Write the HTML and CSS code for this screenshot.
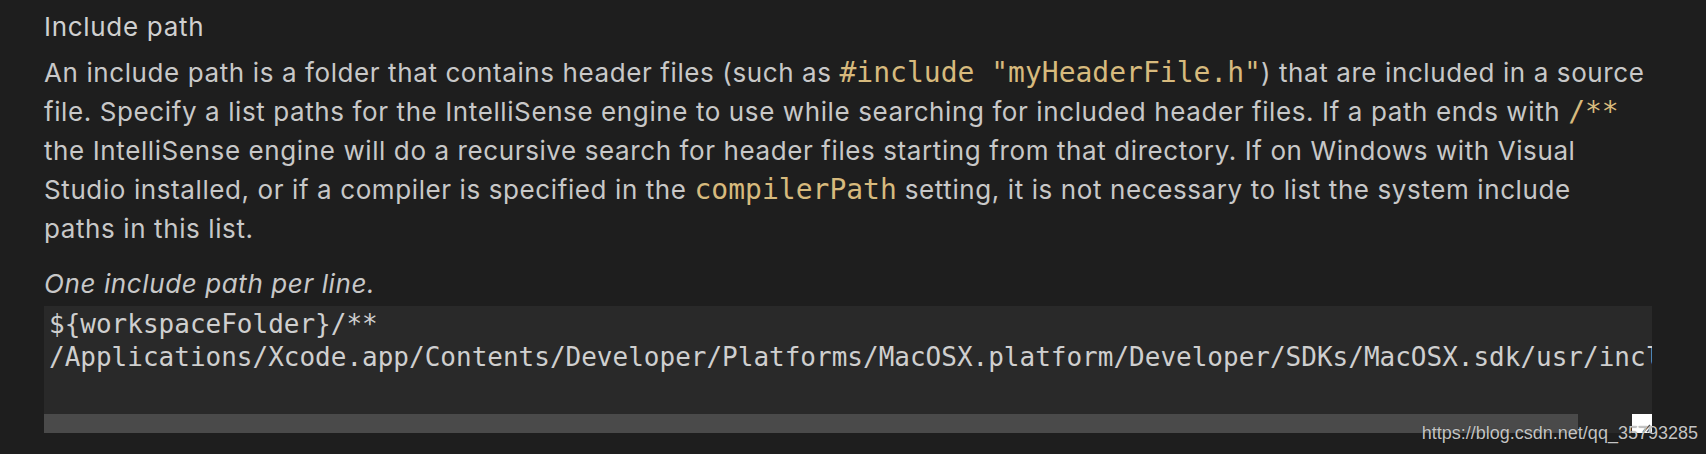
FILE: index.html
```html
<!DOCTYPE html>
<html>
<head>
<meta charset="utf-8">
<link rel="stylesheet" href="styles.css">
</head>
<body>
<div class="setting">
  <div class="title">Include path</div>
  <div class="desc">An include path is a folder that contains header files (such as <code>#include "myHeaderFile.h"</code>) that are included in a source<br>file. Specify a list paths for the IntelliSense engine to use while searching for included header files. If a path ends with <code>/**</code><br>the IntelliSense engine will do a recursive search for header files starting from that directory. If on Windows with Visual<br>Studio installed, or if a compiler is specified in the <code>compilerPath</code> setting, it is not necessary to list the system include<br>paths in this list.</div>
  <div class="hint">One include path per line.</div>
  <div class="editor">
    <div class="lines">${workspaceFolder}/**
/Applications/Xcode.app/Contents/Developer/Platforms/MacOSX.platform/Developer/SDKs/MacOSX.sdk/usr/include</div>
    <div class="hscroll"><div class="thumb"></div></div>
    <div class="grip"><svg width="20" height="19" viewBox="0 0 20 19"><path d="M18 11 L11 18 M18 15 L15 18" stroke="#555" stroke-width="1.4" fill="none"/></svg></div>
  </div>
</div>
<div class="watermark">https://blog.csdn.net/qq_35793285</div>
</body>
</html>
```
FILE: styles.css
```css
html, body {
  margin: 0;
  padding: 0;
  background: #1e1e1e;
  width: 1706px;
  height: 454px;
  overflow: hidden;
}
body {
  position: relative;
  font-family: Inter, "Noto Sans", sans-serif;
}
.setting {
  padding: 7px 0 0 44px;
  width: 1608px;
}
.title {
  font-size: 26px;
  line-height: 39px;
  letter-spacing: 0.7px;
  color: #d0d0d0;
}
.desc {
  margin-top: 7px;
  width: 1640px;
  font-size: 26px;
  line-height: 39px;
  letter-spacing: 0.6px;
  color: #c8c8c8;
}
code {
  font-family: "DejaVu Sans Mono", monospace;
  font-size: 28px;
  letter-spacing: 0;
  color: #d7ba7d;
}
.hint {
  margin-top: 16px;
  font-size: 26px;
  line-height: 39px;
  letter-spacing: 0.6px;
  font-style: italic;
  color: #c8c8c8;
}
.editor {
  position: relative;
  margin-top: 3px;
  background: #292929;
  height: 127px;
}
.lines {
  height: 105px;
  padding: 2px 0 0 5px;
  overflow: hidden;
  white-space: pre;
  font-family: "DejaVu Sans Mono", monospace;
  font-size: 26px;
  line-height: 33px;
  color: #cfcfcf;
}
.hscroll {
  height: 19px;
  margin-top: 1px;
}
.thumb {
  width: 1534px;
  height: 19px;
  background: #4a4a4a;
}
.grip {
  position: absolute;
  right: 0;
  bottom: 0;
  width: 20px;
  height: 19px;
  background: #ffffff;
}
.grip svg { display: block; }
.watermark {
  position: absolute;
  right: 8px;
  top: 423px;
  font-family: "Liberation Sans", Arial, sans-serif;
  font-size: 18px;
  line-height: 20px;
  color: #c4c4c4;
  text-shadow: 0 0 1px rgba(0,0,0,0.5);
}
```
